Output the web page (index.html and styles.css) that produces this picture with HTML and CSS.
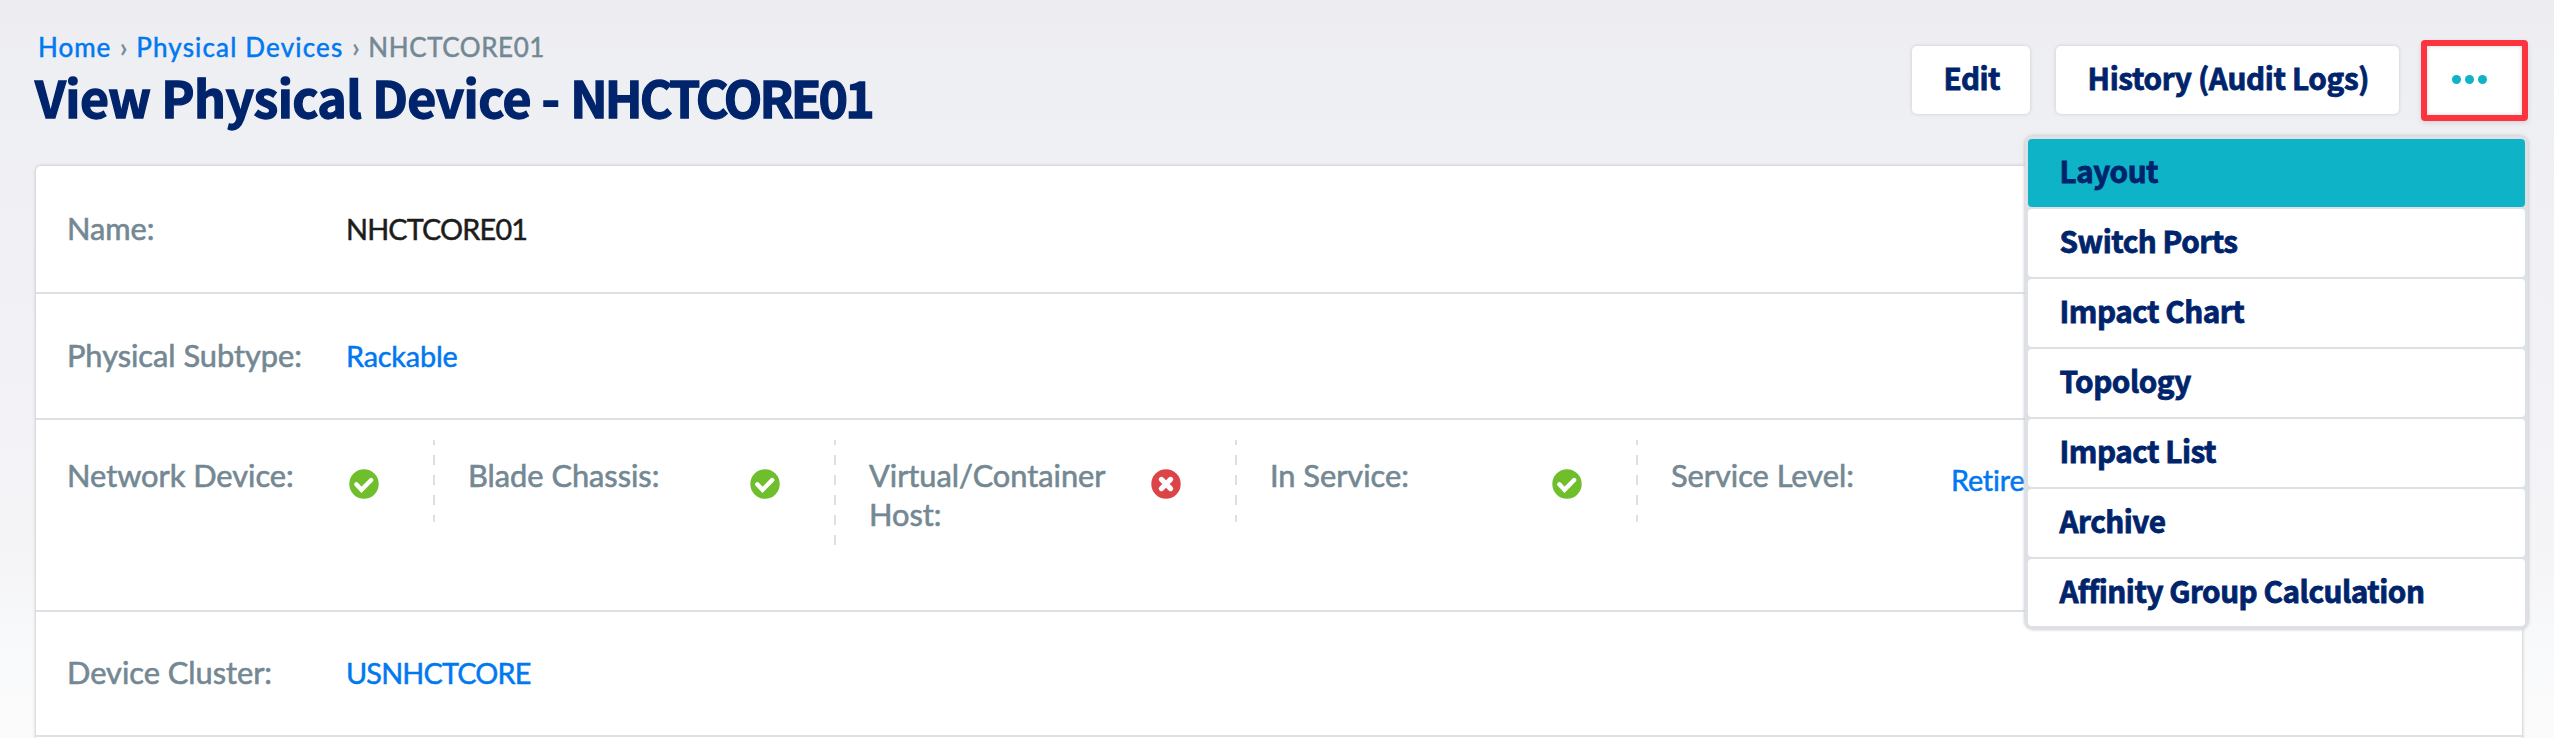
FILE: index.html
```html
<!DOCTYPE html>
<html lang="en">
<head>
<meta charset="utf-8">
<title>View Physical Device - NHCTCORE01</title>
<link rel="stylesheet" href="styles.css">
</head>
<body>
<svg class="defs" width="0" height="0">
  <symbol id="yes" viewBox="0 0 30 30"><circle cx="15" cy="15" r="14.7" fill="#6fbe2c"/><path d="M7.3 15.3l5.2 5.5L22.2 11" fill="none" stroke="#fff" stroke-width="4.4" stroke-linecap="round" stroke-linejoin="miter"/></symbol>
  <symbol id="no" viewBox="0 0 30 30"><circle cx="15" cy="15" r="14.7" fill="#dc4548"/><path d="M10.4 10.4l9.2 9.2M19.6 10.4l-9.2 9.2" fill="none" stroke="#fff" stroke-width="5.2" stroke-linecap="round"/></symbol>
</svg>
<header class="header">
  <div class="heading">
    <nav class="crumbs">
      <a class="home" href="#">Home</a><span class="sep">›</span><a href="#">Physical Devices</a><span class="sep">›</span><span class="current">NHCTCORE01</span>
    </nav>
    <h1 class="title">View Physical Device - <span class="device">NHCTCORE01</span></h1>
  </div>
  <div class="actions">
    <button class="btn edit">Edit</button>
    <button class="btn history">History (Audit Logs)</button>
    <div class="more">
      <button class="more-btn" aria-label="More"><i class="dot"></i><i class="dot"></i><i class="dot"></i></button>
      <ul class="menu">
        <li class="item active">Layout</li>
        <li class="item">Switch Ports</li>
        <li class="item">Impact Chart</li>
        <li class="item">Topology</li>
        <li class="item">Impact List</li>
        <li class="item">Archive</li>
        <li class="item">Affinity Group Calculation</li>
      </ul>
    </div>
  </div>
</header>
<main class="card">
  <section class="row row-name"><span class="label">Name:</span><span class="value plain caps">NHCTCORE01</span></section>
  <section class="row row-subtype"><span class="label">Physical Subtype:</span><a class="value" href="#">Rackable</a></section>
  <section class="flags">
    <div class="cell"><span class="label">Network Device:</span><svg class="icon"><use href="#yes"/></svg></div>
    <div class="cell"><span class="label">Blade Chassis:</span><svg class="icon"><use href="#yes"/></svg></div>
    <div class="cell"><span class="label">Virtual/Container Host:</span><svg class="icon"><use href="#no"/></svg></div>
    <div class="cell"><span class="label">In Service:</span><svg class="icon"><use href="#yes"/></svg></div>
    <div class="cell"><span class="label">Service Level:</span><a class="value retire" href="#">Retire</a></div>
  </section>
  <section class="row row-cluster"><span class="label">Device Cluster:</span><a class="value caps" href="#">USNHCTCORE</a></section>
</main>
</body>
</html>
```
FILE: styles.css
```css
* { box-sizing: border-box; }
html { height: 100%; }
body {
  margin: 0;
  height: 738px;
  overflow: hidden;
  background: linear-gradient(#edecf1 0, #eeeff3 60px, #f0f0f5 270px, #f5f5f8 560px, #f8f9fb 640px, #fbfbfb 738px);
  font-family: Lato, "Liberation Sans", sans-serif;
  color: #1c1c1c;
}
a { color: #0078f0; text-decoration: none; }
.defs { display: none; }

.header {
  display: flex;
  justify-content: space-between;
  height: 166px;
  padding: 0 26px 0 36px;
}
.heading { padding-top: 31px; }
.crumbs {
  display: flex;
  height: 32px;
  padding-left: 2px;
  line-height: 33px;
  font-size: 26px;
  color: #748893;
  -webkit-text-stroke: .5px currentColor;
}
.crumbs a { letter-spacing: .045em; }
.crumbs .home { letter-spacing: .038em; }
.crumbs .current { letter-spacing: .022em; }
.sep { width: 25px; text-align: center; }
.title {
  margin: 3px 0 0 -1px;
  font: 700 50px/61px "Noto Sans CJK SC", "Noto Sans", sans-serif;
  letter-spacing: -.0125em;
  color: #00246b;
  -webkit-text-stroke: 1.3px #00246b;
  white-space: nowrap;
}
.device { letter-spacing: -.057em; }

.actions { display: flex; padding-top: 46px; }
.btn, .item {
  font: 700 29.7px/64px "Noto Sans CJK SC", "Noto Sans", sans-serif;
  letter-spacing: -.0165em;
  color: #00246b;
  -webkit-text-stroke: .8px #00246b;
  white-space: nowrap;
}
.btn {
  height: 68px;
  padding: 0 0 4px 31.5px;
  border: 0;
  border-radius: 5px;
  background: #fff;
  box-shadow: 0 0 3px 1px #d9d9dc;
  text-align: left;
}
.edit { width: 118px; margin-right: 26px; }
.history { width: 343px; margin-right: 22px; letter-spacing: -.0115em; }
.more { position: relative; margin-top: -6px; height: 81px; }
.more-btn {
  display: flex;
  align-items: center;
  gap: 4px;
  width: 107px;
  height: 81px;
  padding: 0 0 2px 25px;
  border: 6px solid #fb3440;
  border-radius: 4px;
  background: #fff;
  box-shadow: 0 2px 5px #d5d5da, inset 0 0 4px #d4d4d8;
}
.dot { width: 9px; height: 9px; border-radius: 50%; background: #0fb3c8; }
.menu {
  position: absolute;
  top: 96px;
  right: 0;
  width: 503px;
  margin: 0;
  padding: 3px;
  list-style: none;
  border-radius: 8px;
  background: #dde0e4;
  box-shadow: 0 0 3px 1px #d0d0d3;
}
.item {
  height: 68px;
  padding: 0 0 4px 31.5px;
  margin-bottom: 2px;
  border-radius: 4px;
  background: #fff;
}
.item:last-child { height: 67px; margin-bottom: 0; line-height: 63px; }
.active { background: #0fb3c8; }

.card {
  width: 2486px;
  height: 580px;
  margin-left: 36px;
  border-radius: 5px 5px 0 0;
  background: #fff;
  box-shadow: 0 0 3px 1px #d0d0d2;
}
.row {
  display: flex;
  align-items: baseline;
  padding-left: 31px;
  border-bottom: 2px solid #dce1e5;
  line-height: 39px;
}
.row-name { height: 128px; padding-top: 43px; }
.row-subtype { height: 126px; padding-top: 42px; }
.row-cluster { height: 125px; padding-top: 41px; }
.label {
  flex: none;
  width: 279px;
  font-size: 30.8px;
  line-height: 39px;
  letter-spacing: -.001em;
  color: #748893;
  -webkit-text-stroke: .6px currentColor;
}
.value {
  font-size: 28.8px;
  letter-spacing: -.006em;
  -webkit-text-stroke: .5px currentColor;
}
.plain { color: #1c1c1c; }
.caps { letter-spacing: -.028em; }

.flags {
  display: flex;
  align-items: flex-start;
  height: 192px;
  padding-top: 20px;
  border-bottom: 2px solid #dce1e5;
}
.cell {
  display: flex;
  width: 401px;
  min-height: 82px;
  padding: 16px 0 16px 35px;
  background: repeating-linear-gradient(#dddfe5 0 5px, transparent 5px 15px, #dddfe5 15px 20px) left / 2px 100% no-repeat;
}
.cell:first-child { width: 397px; padding-left: 31px; background: none; }
.cell .label { padding-right: 30px; }
.icon { width: 30px; height: 30px; margin: 13px 0 0 3px; }
.retire { padding: 5px 0 0 1px; line-height: 39px; }
```
